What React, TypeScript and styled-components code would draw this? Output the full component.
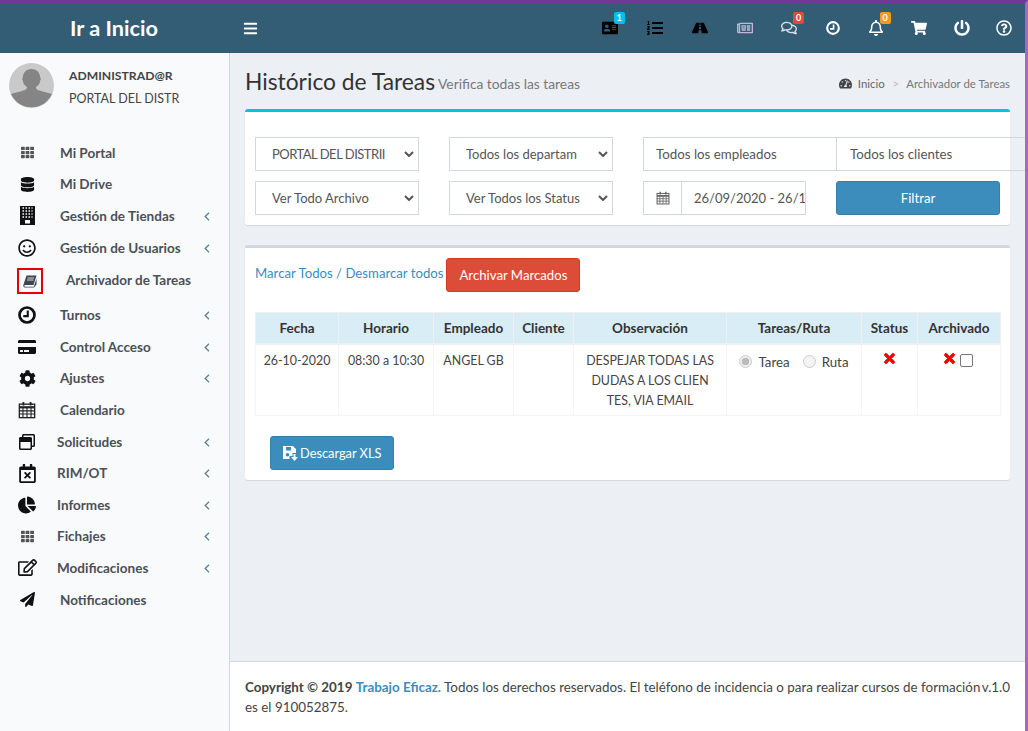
import styled, { createGlobalStyle } from "styled-components";
import type { ReactNode } from "react";
import {
  FaAddressCard,
  FaBars,
  FaChartPie,
  FaCog,
  FaCreditCard,
  FaDatabase,
  FaListOl,
  FaPaperPlane,
  FaPowerOff,
  FaRegBell,
  FaRegCalendarTimes,
  FaRegComments,
  FaRegEdit,
  FaRegNewspaper,
  FaRegQuestionCircle,
  FaRegSmile,
  FaRegWindowRestore,
  FaRoad,
  FaShoppingCart,
  FaTachometerAlt,
  FaTh,
  FaTimes,
} from "react-icons/fa";

const GlobalStyle = createGlobalStyle`
  html, body {
    margin: 0;
    padding: 0;
    height: 100%;
  }
  body {
    background: #ecf0f5;
    font-family: "Lato", "Open Sans", "Liberation Sans", sans-serif;
    font-size: 14px;
    color: #333;
    overflow: hidden;
  }
  * {
    box-sizing: border-box;
  }
`;

const Page = styled.div`
  width: 1028px;
  height: 731px;
  display: flex;
  flex-direction: column;
  border-top: 3px solid #6a3a9c;
  border-right: 3px solid #a968bd;
  overflow: hidden;
`;
const Header = styled.header`
  height: 50px;
  flex: none;
  display: flex;
  align-items: center;
  background: #325d75;
  color: #fff;
`;
const Brand = styled.div`
  width: 230px;
  padding-left: 70px;
  font-size: 21.7px;
  font-weight: 700;
`;
const Burger = styled.div`
  display: flex;
  font-size: 15px;
  padding-left: 13px;
`;
const TopIcons = styled.div`
  margin-left: auto;
  display: flex;
  align-items: center;
`;
const TopIcon = styled.div<{ $color?: string; $width: number }>`
  position: relative;
  width: ${(p) => p.$width}px;
  height: 50px;
  display: flex;
  align-items: center;
  justify-content: center;
  font-size: 16px;
  color: ${(p) => p.$color ?? "#fff"};
`;
const Badge = styled.span<{ $bg: string }>`
  position: absolute;
  top: 9px;
  left: 50%;
  margin-left: 4px;
  width: 11px;
  height: 12px;
  border-radius: 2px;
  background: ${(p) => p.$bg};
  color: #fff;
  font-size: 9px;
  font-weight: 700;
  line-height: 12px;
  text-align: center;
`;
const Body = styled.div`
  flex: 1;
  min-height: 0;
  display: flex;
`;
const Sidebar = styled.aside`
  width: 230px;
  flex: none;
  background: #f9fafc;
  border-right: 1px solid #d2d6de;
`;
const UserPanel = styled.div`
  display: flex;
  gap: 15px;
  padding: 10px 0 0 9px;
  height: 84px;
`;
const Avatar = styled.div`
  width: 45px;
  height: 45px;
  flex: none;
  display: flex;
`;
const UserText = styled.div`
  padding-top: 2px;
  font-size: 12.5px;
  line-height: 22.5px;
  color: #444;
  white-space: nowrap;
`;
const UserName = styled.div`
  font-size: 12.2px;
  font-weight: 700;
`;
const Menu = styled.nav`
  display: flex;
  flex-direction: column;
`;
const MenuRow = styled.div<{ $indent: number; $tall?: boolean }>`
  height: ${(p) => (p.$tall ? 36 : 31.6)}px;
  padding-bottom: ${(p) => (p.$tall ? 3 : 0)}px;
  display: flex;
  align-items: center;
  position: relative;
  padding-left: ${(p) => p.$indent}px;
  font-size: 13.5px;
  font-weight: 700;
  color: #4b4f56;
  white-space: nowrap;
`;
const MenuIcon = styled.span<{ $size: number; $color?: string }>`
  position: absolute;
  left: 14px;
  top: 50%;
  width: 26px;
  height: 26px;
  margin-top: -13px;
  display: flex;
  align-items: center;
  justify-content: center;
  font-size: ${(p) => p.$size}px;
  color: ${(p) => p.$color ?? "#111"};
`;
const BoxedIcon = styled.span`
  position: absolute;
  left: 17px;
  top: 50%;
  width: 26px;
  height: 26px;
  margin-top: -13px;
  display: flex;
  align-items: center;
  justify-content: center;
  border: 2px solid #e60000;
`;
const Caret = styled.span`
  position: absolute;
  left: 204px;
  top: 50%;
  margin-top: -4px;
  display: flex;
  color: #5b7f99;
`;
const Content = styled.main`
  flex: 1;
  min-width: 0;
  display: flex;
  flex-direction: column;
`;
const Inner = styled.div`
  flex: 1;
  padding: 0 15px;
`;
const TitleBar = styled.div`
  height: 56px;
  display: flex;
  align-items: center;
`;
const Title = styled.h1`
  margin: 0;
  font-size: 22.8px;
  font-weight: 400;
  color: #333;
`;
const Subtitle = styled.small`
  margin-left: 3px;
  padding-top: 5px;
  font-size: 13.8px;
  color: #777;
`;
const Crumbs = styled.div`
  margin-left: auto;
  padding-top: 5px;
  display: flex;
  align-items: center;
  font-size: 11.4px;
  color: #666;
`;
const CrumbIcon = styled.span`
  display: flex;
  font-size: 13px;
  color: #444;
  margin-right: 6px;
`;
const CrumbSep = styled.span`
  margin: 0 7px 0 8px;
  color: #bbb;
`;
const CrumbLast = styled.span`
  color: #777;
`;
const FilterCard = styled.section`
  height: 116px;
  background: #fff;
  border-top: 3px solid #00c0ef;
  border-radius: 3px;
  box-shadow: 0 1px 1px rgba(0, 0, 0, 0.1);
  padding: 25px 0 0 10px;
  margin-bottom: 20px;
  display: grid;
  grid-template-columns: 164px 164px 163px 164px;
  grid-auto-rows: 34px;
  column-gap: 30px;
  row-gap: 10px;
`;
const Select = styled.div`
  border: 1px solid #d2d6de;
  display: flex;
  align-items: center;
  justify-content: space-between;
  padding: 0 4px 0 16px;
  font-size: 13px;
  color: #555;
  white-space: nowrap;
  overflow: hidden;
`;
const SelectText = styled.span<{ $tight?: boolean }>`
  overflow: hidden;
  width: 118px;
  letter-spacing: ${(p) => (p.$tight ? "-0.5px" : "0")};
`;
const InputPair = styled.div`
  grid-column: 3 / span 2;
  display: flex;
`;
const FakeInput = styled.div`
  height: 34px;
  width: 194px;
  flex: none;
  border: 1px solid #d2d6de;
  padding: 0 12px;
  display: flex;
  align-items: center;
  font-size: 13.3px;
  color: #555;
  white-space: nowrap;
  & + & {
    border-left: 0;
    padding-left: 13px;
  }
`;
const DateGroup = styled.div`
  display: flex;
  border: 1px solid #d2d6de;
`;
const DateAddon = styled.span`
  width: 38px;
  flex: none;
  border-right: 1px solid #d2d6de;
  display: flex;
  align-items: center;
  justify-content: center;
`;
const DateValue = styled.span`
  padding-left: 12px;
  display: flex;
  align-items: center;
  font-size: 13px;
  color: #555;
  white-space: nowrap;
  overflow: hidden;
`;
const Button = styled.button<{ $bg: string; $border: string }>`
  border: 1px solid ${(p) => p.$border};
  background: ${(p) => p.$bg};
  color: #fff;
  border-radius: 3px;
  font: inherit;
  font-size: 13.2px;
  display: inline-flex;
  align-items: center;
  justify-content: center;
  gap: 3px;
  height: 34px;
  padding: 0 12px;
  white-space: nowrap;
`;
const DownloadButton = styled(Button)`
  font-size: 12.8px;
  gap: 2px;
`;
const TableCard = styled.section`
  height: 235px;
  background: #fff;
  border-top: 3px solid #d2d6de;
  border-radius: 3px;
  box-shadow: 0 1px 1px rgba(0, 0, 0, 0.1);
  padding: 10px 10px 0;
`;
const Actions = styled.div`
  display: flex;
  align-items: flex-start;
  height: 54px;
  font-size: 13.2px;
  color: #3c8dbc;
`;
const ActionLinks = styled.span`
  padding-top: 7px;
  margin-right: 3px;
`;
const Table = styled.table`
  width: 745px;
  border-collapse: collapse;
  table-layout: fixed;
  font-size: 12.4px;
  color: #444;
  th {
    height: 31px;
    background: #d9edf7;
    border: 1px solid #f0f0f0;
    border-bottom-width: 2px;
    font-weight: 700;
    font-size: 13.5px;
    color: #333;
    padding: 0;
  }
  td {
    height: 72px;
    vertical-align: top;
    text-align: center;
    border: 1px solid #f4f4f4;
    padding: 6px 4px 0;
    line-height: 20px;
  }
`;
const RadioRow = styled.div`
  display: flex;
  align-items: center;
  justify-content: center;
  height: 20px;
  margin-top: 1px;
  gap: 6px;
  font-size: 13.3px;
`;
const Radio = styled.span<{ $checked?: boolean }>`
  width: 13px;
  height: 13px;
  border-radius: 50%;
  border: 1px solid #ccc;
  background: ${(p) => (p.$checked ? "radial-gradient(circle, #bbb 0 3.5px, #eee 4px)" : "#f4f4f4")};
  margin-left: ${(p) => (p.$checked ? "0" : "7px")};
`;
const CrossCell = styled.div`
  display: flex;
  align-items: flex-start;
  justify-content: center;
  gap: 3px;
  font-size: 15px;
  color: #f00;
  svg {
    stroke: currentColor;
    stroke-width: 30;
  }
`;
const CheckBox = styled.span`
  width: 13px;
  height: 13px;
  margin: 3px 3px 0 0;
  border: 1px solid #767676;
  border-radius: 2px;
  background: #fff;
`;
const DownloadRow = styled.div`
  padding: 20px 0 0 15px;
`;
const Footer = styled.footer`
  height: 70px;
  flex: none;
  background: #fff;
  border-top: 1px solid #d2d6de;
  padding: 15px 15px 0;
  font-size: 13.4px;
  line-height: 20px;
  color: #444;
  position: relative;
`;
const FooterLink = styled.b`
  color: #3c8dbc;
`;
const Version = styled.span`
  position: absolute;
  right: 15px;
  top: 15px;
`;

const SelectArrow = () => (
  <svg width="10" height="6" viewBox="0 0 10 6">
    <path d="M1 1l4 4 4-4" fill="none" stroke="#555" strokeWidth="2" />
  </svg>
);

const AngleLeft = () => (
  <svg width="6" height="9" viewBox="0 0 6 9">
    <path d="M5 0.700L1.200 4.500 5 8.300" fill="none" stroke="currentColor" strokeWidth="1.300" />
  </svg>
);

const ClockIcon = ({ size }: { size: number }) => (
  <svg width={size} height={size} viewBox="0 0 24 24" fill="none" stroke="currentColor">
    <circle cx="12" cy="12" r="10" strokeWidth="3.6" />
    <path d="M13 6v7.500H7" strokeWidth="2.800" />
  </svg>
);

const CalendarIcon = ({ size, color }: { size: number; color: string }) => (
  <svg width={size} height={size} viewBox="0 0 20 20" fill="none" stroke={color}>
    <rect x="1.500" y="3.500" width="17" height="15" strokeWidth="1.500" />
    <path d="M1.500 7h17" strokeWidth="2.500" />
    <path d="M1.500 11h17M1.500 14.500h17M5.500 7v11M10 7v11M14.500 7v11" strokeWidth="1.200" />
    <path d="M6 1v4M14 1v4" strokeWidth="2" />
  </svg>
);

const BuildingIcon = () => (
  <svg width="15" height="19" viewBox="0 0 15 19">
    <rect width="15" height="19" fill="#111" />
    <path
      d="M2.500 2h10M2.500 5h10M2.500 8h10M2.500 11h10"
      stroke="#fff"
      strokeWidth="1.400"
      strokeDasharray="1.500 1.500"
    />
    <rect x="5" y="14" width="5" height="3.500" fill="#fff" />
  </svg>
);

const BookIcon = () => (
  <svg width="14" height="13" viewBox="0 0 14 13">
    <path d="M3.500 0.500H13.500L10.500 10H2.200C1 10 1 11.800 2.200 11.800H10.800L13.500 3.500V9.500L11 12.500H1.800C0.300 12.500 0 11 0.500 9.500z" fill="#3d4650" />
    <path d="M4.500 3h6.500M4 5h6.500" stroke="#fff" strokeWidth="0.800" />
  </svg>
);

const SaveDownIcon = () => (
  <svg width="15" height="15" viewBox="0 0 15 15" fill="#fff">
    <path d="M0 0h10l3 3v4H9.500v3H6.500V13H0z" />
    <rect x="3" y="1" width="5" height="3.500" fill="#3c8dbc" />
    <circle cx="4.500" cy="8.800" r="1.800" fill="#3c8dbc" />
    <path d="M10.500 8h2v3H15l-3.500 4L8 11h2.500z" />
  </svg>
);

type Item = {
  label: string;
  icon: ReactNode;
  size: number;
  indent: number;
  caret?: boolean;
  color?: string;
};

const items: Item[] = [
  { label: "Mi Portal", icon: <FaTh />, size: 13, indent: 60, color: "#555" },
  { label: "Mi Drive", icon: <FaDatabase />, size: 15, indent: 60 },
  { label: "Gestión de Tiendas", icon: <BuildingIcon />, size: 18, indent: 60, caret: true },
  { label: "Gestión de Usuarios", icon: <FaRegSmile />, size: 18, indent: 60, caret: true },
  { label: "Turnos", icon: <ClockIcon size={18} />, size: 18, indent: 60, caret: true },
  { label: "Control Acceso", icon: <FaCreditCard />, size: 18, indent: 60, caret: true },
  { label: "Ajustes", icon: <FaCog />, size: 17, indent: 60, caret: true },
  { label: "Calendario", icon: <CalendarIcon size={18} color="#222" />, size: 18, indent: 60 },
  { label: "Solicitudes", icon: <FaRegWindowRestore />, size: 16, indent: 57, caret: true },
  { label: "RIM/OT", icon: <FaRegCalendarTimes />, size: 19, indent: 57, caret: true },
  { label: "Informes", icon: <FaChartPie />, size: 18, indent: 57, caret: true },
  { label: "Fichajes", icon: <FaTh />, size: 13, indent: 57, caret: true, color: "#555" },
  { label: "Modificaciones", icon: <FaRegEdit />, size: 19, indent: 57, caret: true },
  { label: "Notificaciones", icon: <FaPaperPlane />, size: 15, indent: 60 },
];

const topIcons: { icon: ReactNode; color?: string; badge?: string; bg?: string; width: number }[] = [
  { icon: <FaAddressCard />, color: "#000", badge: "1", bg: "#00c0ef", width: 45 },
  { icon: <FaListOl />, color: "#000", width: 45 },
  { icon: <FaRoad />, color: "#000", width: 45 },
  { icon: <FaRegNewspaper />, color: "#c4b5d6", width: 45 },
  { icon: <FaRegComments />, color: "#d8e0e6", badge: "0", bg: "#dd4b39", width: 44 },
  { icon: <ClockIcon size={14} />, width: 43 },
  { icon: <FaRegBell />, badge: "0", bg: "#f39c12", width: 43 },
  { icon: <FaShoppingCart />, width: 43 },
  { icon: <FaPowerOff />, width: 43 },
  { icon: <FaRegQuestionCircle />, width: 42 },
];

export default function App() {
  const renderRow = (it: Item) => (
    <MenuRow key={it.label} $indent={it.indent}>
      <MenuIcon $size={it.size} $color={it.color}>
        {it.icon}
      </MenuIcon>
      {it.label}
      {it.caret && (
        <Caret>
          <AngleLeft />
        </Caret>
      )}
    </MenuRow>
  );

  return (
    <Page>
      <GlobalStyle />
      <Header>
        <Brand>Ir a Inicio</Brand>
        <Burger>
          <FaBars />
        </Burger>
        <TopIcons>
          {topIcons.map((t, i) => (
            <TopIcon key={i} $color={t.color} $width={t.width}>
              {t.icon}
              {t.badge && <Badge $bg={t.bg ?? "#000"}>{t.badge}</Badge>}
            </TopIcon>
          ))}
        </TopIcons>
      </Header>
      <Body>
        <Sidebar>
          <UserPanel>
            <Avatar>
              <svg viewBox="0 0 45 45" width="45" height="45">
                <circle cx="22.5" cy="22.5" r="22.5" fill="#c9c9c9" />
                <path
                  d="M2 31c3-1 8-2 11-3 4-1 5-2 5-4-3-2-4-4-4-6-1-1-1-3 0-4 0-4 3-8 8.500-8s8.500 4 8.500 8c1 1 1 3 0 4 0 2-1 4-4 6 0 2 1 3 5 4 3 1 8 2 11 3a22.500 22.500 0 0 1-41 0z"
                  fill="#858585"
                />
              </svg>
            </Avatar>
            <UserText>
              <UserName>ADMINISTRAD@R</UserName>
              <div>PORTAL DEL DISTR</div>
            </UserText>
          </UserPanel>
          <Menu>
            {items.slice(0, 4).map(renderRow)}
            <MenuRow $indent={66} $tall>
              <BoxedIcon>
                <BookIcon />
              </BoxedIcon>
              Archivador de Tareas
            </MenuRow>
            {items.slice(4).map(renderRow)}
          </Menu>
        </Sidebar>
        <Content>
          <Inner>
            <TitleBar>
              <Title>Histórico de Tareas</Title>
              <Subtitle>Verifica todas las tareas</Subtitle>
              <Crumbs>
                <CrumbIcon>
                  <FaTachometerAlt />
                </CrumbIcon>
                Inicio
                <CrumbSep>&gt;</CrumbSep>
                <CrumbLast>Archivador de Tareas</CrumbLast>
              </Crumbs>
            </TitleBar>
            <FilterCard>
              <Select>
                <SelectText $tight>PORTAL DEL DISTRII</SelectText>
                <SelectArrow />
              </Select>
              <Select>
                <SelectText>Todos los departam</SelectText>
                <SelectArrow />
              </Select>
              <InputPair>
                <FakeInput>Todos los empleados</FakeInput>
                <FakeInput>Todos los clientes</FakeInput>
              </InputPair>
              <Select>
                <SelectText>Ver Todo Archivo</SelectText>
                <SelectArrow />
              </Select>
              <Select>
                <SelectText>Ver Todos los Status</SelectText>
                <SelectArrow />
              </Select>
              <DateGroup>
                <DateAddon>
                  <CalendarIcon size={14} color="#666" />
                </DateAddon>
                <DateValue>26/09/2020 - 26/1</DateValue>
              </DateGroup>
              <Button $bg="#3c8dbc" $border="#367fa9">
                Filtrar
              </Button>
            </FilterCard>
            <TableCard>
              <Actions>
                <ActionLinks>Marcar Todos / Desmarcar todos</ActionLinks>
                <Button $bg="#dd4b39" $border="#d73925">
                  Archivar Marcados
                </Button>
              </Actions>
              <Table>
                <colgroup>
                  <col style={{ width: 83 }} />
                  <col style={{ width: 95 }} />
                  <col style={{ width: 80 }} />
                  <col style={{ width: 60 }} />
                  <col style={{ width: 153 }} />
                  <col style={{ width: 135 }} />
                  <col style={{ width: 56 }} />
                  <col style={{ width: 83 }} />
                </colgroup>
                <thead>
                  <tr>
                    <th>Fecha</th>
                    <th>Horario</th>
                    <th>Empleado</th>
                    <th>Cliente</th>
                    <th>Observación</th>
                    <th>Tareas/Ruta</th>
                    <th>Status</th>
                    <th>Archivado</th>
                  </tr>
                </thead>
                <tbody>
                  <tr>
                    <td>26-10-2020</td>
                    <td>08:30 a 10:30</td>
                    <td>ANGEL GB</td>
                    <td></td>
                    <td>
                      DESPEJAR TODAS LAS
                      <br />
                      DUDAS A LOS CLIEN
                      <br />
                      TES, VIA EMAIL
                    </td>
                    <td>
                      <RadioRow>
                        <Radio $checked />
                        Tarea
                        <Radio />
                        Ruta
                      </RadioRow>
                    </td>
                    <td>
                      <CrossCell>
                        <FaTimes />
                      </CrossCell>
                    </td>
                    <td>
                      <CrossCell>
                        <FaTimes />
                        <CheckBox />
                      </CrossCell>
                    </td>
                  </tr>
                </tbody>
              </Table>
              <DownloadRow>
                <DownloadButton $bg="#3c8dbc" $border="#367fa9">
                  <SaveDownIcon />
                  Descargar XLS
                </DownloadButton>
              </DownloadRow>
            </TableCard>
          </Inner>
          <Footer>
            <b>Copyright © 2019</b> <FooterLink>Trabajo Eficaz.</FooterLink> Todos los derechos reservados. El teléfono de
            incidencia o para realizar cursos de formación
            <Version>v.1.0</Version>
            <br />
            es el 910052875.
          </Footer>
        </Content>
      </Body>
    </Page>
  );
}
